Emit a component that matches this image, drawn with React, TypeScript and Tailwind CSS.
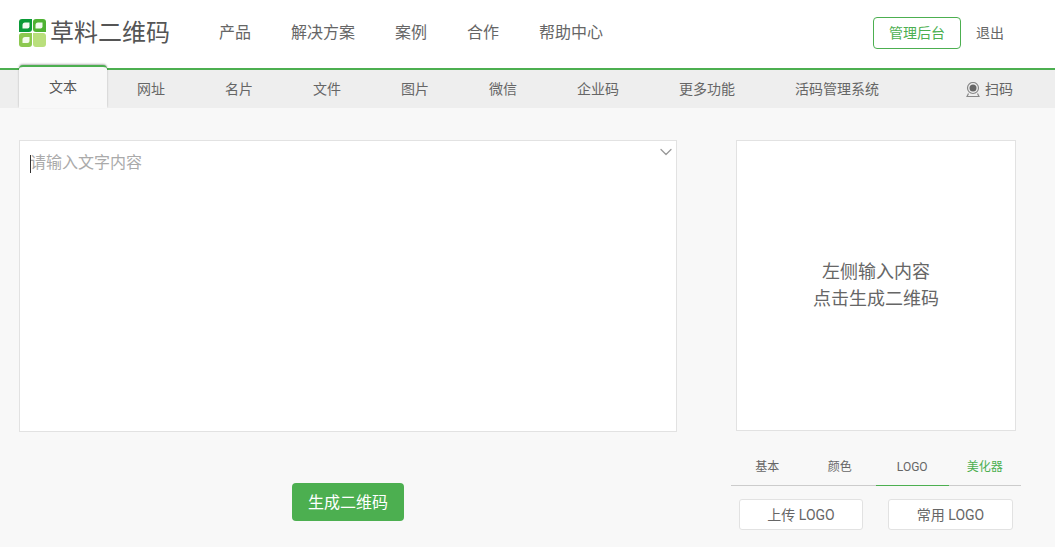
import { ChevronDown } from 'lucide-react';

const NAV_ITEMS = ['产品', '解决方案', '案例', '合作', '帮助中心'];
const TABS = ['文本', '网址', '名片', '文件', '图片', '微信', '企业码', '更多功能', '活码管理系统'];

function Logo() {
  return (
    <svg width="27" height="28" viewBox="0 0 27 28" className="shrink-0">
      <path d="M3 0h10v10a3 3 0 0 1-3 3H0V3a3 3 0 0 1 3-3z" fill="#0a9a37" />
      <path d="M6 3.500h4.500v4a2 2 0 0 1-2 2H3.500V6a2.500 2.500 0 0 1 2.500-2.500z" fill="#f2faf0" />
      <path d="M17 0h7a3 3 0 0 1 3 3v10H17a3 3 0 0 1-3-3V3a3 3 0 0 1 3-3z" fill="#4fb233" />
      <path d="M19 3.500h4.500v4a2 2 0 0 1-2 2H16.500V6a2.500 2.500 0 0 1 2.500-2.500z" fill="#f2faf0" />
      <path d="M3 14h10v11a3 3 0 0 1-3 3H3a3 3 0 0 1-3-3V17a3 3 0 0 1 3-3z" fill="#8cc850" />
      <path d="M6 18h4.500v4a2 2 0 0 1-2 2H3.500v-3.500A2.500 2.500 0 0 1 6 18z" fill="#f4faec" />
      <path d="M14 14h10a3 3 0 0 1 3 3v8a3 3 0 0 1-3 3h-7a3 3 0 0 1-3-3V14z" fill="#b9df7c" />
    </svg>
  );
}

function ScanIcon() {
  return (
    <svg width="14" height="15" viewBox="0 0 14 15" className="shrink-0">
      <circle cx="7" cy="6" r="5.500" fill="none" stroke="#888" strokeWidth="1.200" />
      <circle cx="7" cy="6" r="3.500" fill="#666" />
      <path d="M2.500 11.500L1 14.500h12l-1.500-3" fill="none" stroke="#888" strokeWidth="1.200" />
    </svg>
  );
}

export default function App() {
  return (
    <div className="h-[547px] w-[1055px] overflow-hidden bg-[#f8f8f8] font-['Roboto','Noto_Sans_CJK_SC',sans-serif] text-[#555]">
      {/* 顶部导航 */}
      <header className="flex h-[70px] items-center border-b-2 border-[#4caf50] bg-white pb-[2px] pl-[19px]">
        <div className="flex w-[200px] items-center gap-[4px]">
          <Logo />
          <span className="text-[24px] leading-[28px] whitespace-nowrap text-[#555]">草料二维码</span>
        </div>
        <nav className="flex gap-[40px] text-[16px]">
          {NAV_ITEMS.map((item) => (
            <a key={item} className="whitespace-nowrap text-[#666]">{item}</a>
          ))}
        </nav>
        <button className="ml-[270px] h-[32px] w-[88px] rounded-[4px] border border-[#4caf50] bg-white text-[14px] text-[#4caf50]">
          管理后台
        </button>
        <a className="ml-[15px] text-[14px] text-[#666]">退出</a>
      </header>

      {/* 类型标签 */}
      <div className="flex h-[38px] items-stretch bg-[#eeeeee] pl-[19px] text-[14px]">
        {TABS.map((tab, i) => (
          <div
            key={tab}
            className={
              i === 0
                ? 'z-10 -mt-[5px] flex h-[43px] items-center rounded-t-[4px] border-t-2 border-[#4caf50] bg-[#f8f8f8] px-[30px] pb-[1px] whitespace-nowrap shadow-[0_-1px_2px_rgba(0,0,0,0.3)]'
                : 'flex items-center px-[30px] whitespace-nowrap text-[#666]'
            }
          >
            {tab}
          </div>
        ))}
        <div className="ml-[57px] flex items-center gap-[5px] text-[#666]">
          <ScanIcon />
          扫码
        </div>
      </div>

      <main className="flex pt-[32px] pl-[19px]">
        {/* 左侧输入 */}
        <div className="flex w-[658px] flex-col">
          <div className="relative h-[292px] border border-[#e2e2e2] bg-white">
            <textarea
              placeholder="请输入文字内容"
              className="h-full w-full resize-none px-[10px] py-[9px] text-[16px] leading-[26px] outline-none placeholder:text-[#aaa]"
            />
            <span className="absolute top-[14px] left-[10px] h-[18px] w-px bg-[#333]" />
            <ChevronDown className="absolute top-[1px] right-0 h-[20px] w-[20px] text-[#999]" strokeWidth={1.5} />
          </div>
          <button className="mt-[51px] h-[38px] w-[112px] self-center rounded-[4px] bg-[#4caf50] pt-[1px] text-[16px] text-white">
            生成二维码
          </button>
        </div>

        {/* 右侧预览 */}
        <div className="ml-[54px] flex w-[290px] flex-col">
          <div className="mx-[5px] flex h-[291px] w-[280px] flex-col items-center justify-center border border-[#e2e2e2] bg-white pb-[2px] text-[18px] leading-[27px] text-[#666]">
            <div>左侧输入内容</div>
            <div>点击生成二维码</div>
          </div>
          <div className="mt-[19px] grid h-[36px] grid-cols-4 border-b border-[#ccc] text-[12px]">
            <div className="flex items-center justify-center pb-[2px] text-[#666]">基本</div>
            <div className="flex items-center justify-center pb-[2px] text-[#666]">颜色</div>
            <div className="-mb-px flex items-center justify-center border-b border-[#4caf50] pb-[2px] text-[#666]">LOGO</div>
            <div className="flex items-center justify-center pb-[2px] text-[#4caf50]">美化器</div>
          </div>
          <div className="mt-[13px] flex gap-[25px] pl-[8px] text-[14px] text-[#666]">
            <button className="h-[31px] w-[124px] rounded-[3px] border border-[#e2e2e2] bg-white pt-[1px]">上传 LOGO</button>
            <button className="h-[31px] w-[125px] rounded-[3px] border border-[#e2e2e2] bg-white pt-[1px]">常用 LOGO</button>
          </div>
        </div>
      </main>
    </div>
  );
}
